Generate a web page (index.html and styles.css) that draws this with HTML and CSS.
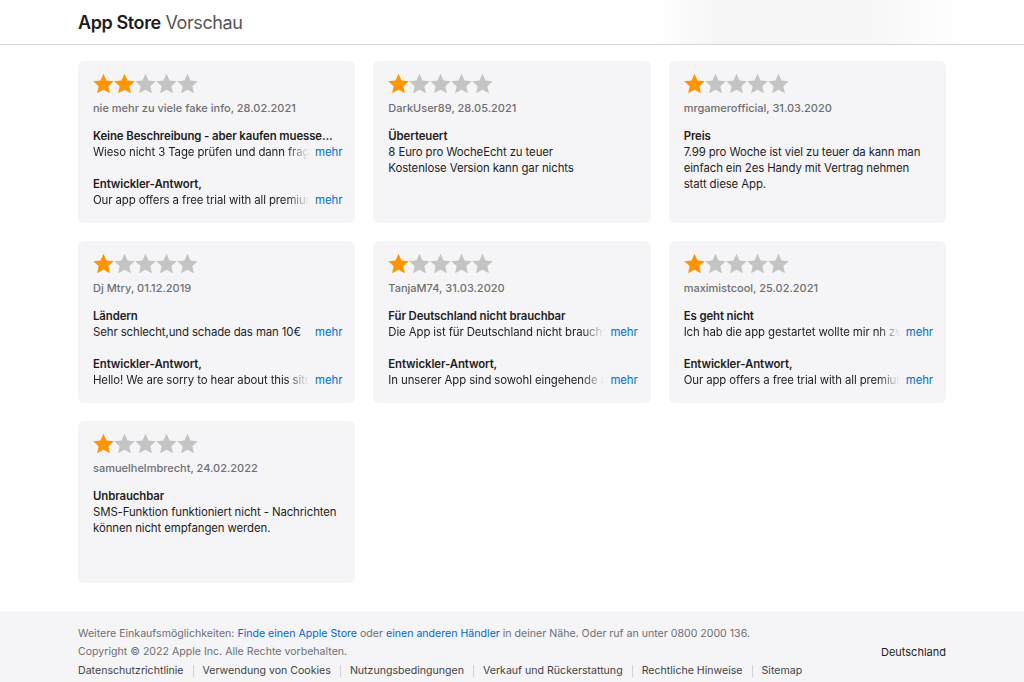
FILE: index.html
```html
<!DOCTYPE html>
<html lang="de">
<head>
<meta charset="utf-8">
<title>App Store Vorschau</title>
<link rel="stylesheet" href="styles.css">
</head>
<body>
<svg width="0" height="0" class="defs">
  <defs>
    <symbol id="star" viewBox="1.2 1.2 21.6 21">
      <path d="M12 1.6l3.1 6.9 7.5.8-5.6 5.1 1.6 7.4L12 18l-6.6 3.8L7 14.4 1.4 9.3l7.5-.8z"/>
    </symbol>
  </defs>
</svg>
<header class="topbar">
  <div class="wrap">
    <h1 class="title"><b>App Store</b> Vorschau</h1>
  </div>
</header>

<main class="wrap">
  <div class="grid">
    <article class="card">
      <div class="stars"><svg class="on"><use href="#star"/></svg><svg class="on"><use href="#star"/></svg><svg><use href="#star"/></svg><svg><use href="#star"/></svg><svg><use href="#star"/></svg></div>
      <div class="meta">nie mehr zu viele fake info, 28.02.2021</div>
      <div class="rtitle">Keine Beschreibung - aber kaufen muesse...</div>
      <div class="trunc"><span class="txt">Wieso nicht 3 Tage prüfen und dann fragen ob man das will</span><a class="more">mehr</a></div>
      <div class="rtitle gap">Entwickler-Antwort,</div>
      <div class="trunc"><span class="txt">Our app offers a free trial with all premium features</span><a class="more">mehr</a></div>
    </article>

    <article class="card">
      <div class="stars"><svg class="on"><use href="#star"/></svg><svg><use href="#star"/></svg><svg><use href="#star"/></svg><svg><use href="#star"/></svg><svg><use href="#star"/></svg></div>
      <div class="meta">DarkUser89, 28.05.2021</div>
      <div class="rtitle">Überteuert</div>
      <p class="body">8 Euro pro WocheEcht zu teuer<br>Kostenlose Version kann gar nichts</p>
    </article>

    <article class="card">
      <div class="stars"><svg class="on"><use href="#star"/></svg><svg><use href="#star"/></svg><svg><use href="#star"/></svg><svg><use href="#star"/></svg><svg><use href="#star"/></svg></div>
      <div class="meta">mrgamerofficial, 31.03.2020</div>
      <div class="rtitle">Preis</div>
      <p class="body">7.99 pro Woche ist viel zu teuer da kann man einfach ein 2es Handy mit Vertrag nehmen statt diese App.</p>
    </article>

    <article class="card">
      <div class="stars"><svg class="on"><use href="#star"/></svg><svg><use href="#star"/></svg><svg><use href="#star"/></svg><svg><use href="#star"/></svg><svg><use href="#star"/></svg></div>
      <div class="meta">Dj Mtry, 01.12.2019</div>
      <div class="rtitle">Ländern</div>
      <div class="trunc"><span class="txt short">Sehr schlecht,und schade das man 10€</span><a class="more">mehr</a></div>
      <div class="rtitle gap">Entwickler-Antwort,</div>
      <div class="trunc"><span class="txt">Hello! We are sorry to hear about this situation</span><a class="more">mehr</a></div>
    </article>

    <article class="card">
      <div class="stars"><svg class="on"><use href="#star"/></svg><svg><use href="#star"/></svg><svg><use href="#star"/></svg><svg><use href="#star"/></svg><svg><use href="#star"/></svg></div>
      <div class="meta">TanjaM74, 31.03.2020</div>
      <div class="rtitle">Für Deutschland nicht brauchbar</div>
      <div class="trunc"><span class="txt">Die App ist für Deutschland nicht brauchbar</span><a class="more">mehr</a></div>
      <div class="rtitle gap">Entwickler-Antwort,</div>
      <div class="trunc"><span class="txt">In unserer App sind sowohl eingehende als auch</span><a class="more">mehr</a></div>
    </article>

    <article class="card">
      <div class="stars"><svg class="on"><use href="#star"/></svg><svg><use href="#star"/></svg><svg><use href="#star"/></svg><svg><use href="#star"/></svg><svg><use href="#star"/></svg></div>
      <div class="meta">maximistcool, 25.02.2021</div>
      <div class="rtitle">Es geht nicht</div>
      <div class="trunc"><span class="txt">Ich hab die app gestartet wollte mir nh zweite</span><a class="more">mehr</a></div>
      <div class="rtitle gap">Entwickler-Antwort,</div>
      <div class="trunc"><span class="txt">Our app offers a free trial with all premium features</span><a class="more">mehr</a></div>
    </article>

    <article class="card">
      <div class="stars"><svg class="on"><use href="#star"/></svg><svg><use href="#star"/></svg><svg><use href="#star"/></svg><svg><use href="#star"/></svg><svg><use href="#star"/></svg></div>
      <div class="meta">samuelhelmbrecht, 24.02.2022</div>
      <div class="rtitle">Unbrauchbar</div>
      <p class="body">SMS-Funktion funktioniert nicht - Nachrichten können nicht empfangen werden.</p>
    </article>
  </div>
</main>

<footer class="footer">
  <div class="wrap">
    <p class="fline">Weitere Einkaufsmöglichkeiten: <a class="flink">Finde einen Apple Store</a> oder <a class="flink">einen anderen Händler</a> in deiner Nähe. Oder ruf an unter 0800 2000 136.</p>
    <div class="frow">
      <p class="fline">Copyright © 2022 Apple Inc. Alle Rechte vorbehalten.</p>
      <span class="country">Deutschland</span>
    </div>
    <nav class="legal">
      <a>Datenschutzrichtlinie</a>
      <a>Verwendung von Cookies</a>
      <a>Nutzungsbedingungen</a>
      <a>Verkauf und Rückerstattung</a>
      <a>Rechtliche Hinweise</a>
      <a>Sitemap</a>
    </nav>
  </div>
</footer>
</body>
</html>
```

FILE: styles.css
```css
* { box-sizing: border-box; }
html, body { margin: 0; padding: 0; }
body {
  font-family: Inter, "Open Sans", "Liberation Sans", sans-serif;
  color: #1d1d1f;
  background: #fff;
  -webkit-font-smoothing: antialiased;
}
.defs { position: absolute; width: 0; height: 0; }

.wrap { width: 868px; margin: 0 auto; }

.topbar {
  height: 45px;
  border-bottom: 1px solid #d6d6d6;
  background: linear-gradient(to right, #fff 0%, #fff 64%, #f6f6f6 70%, #f7f7f7 85%, #fff 94%);
}
.topbar .wrap { height: 44px; display: flex; align-items: center; }
.title {
  margin: 0;
  font-size: 18px;
  font-weight: 400;
  color: #555;
  letter-spacing: -0.4px;
}
.title b { color: #1d1d1f; font-weight: 600; }

main.wrap { padding-top: 16px; }
.grid {
  display: grid;
  grid-template-columns: repeat(3, 1fr);
  grid-auto-rows: 162px;
  gap: 18px;
}
.card {
  background: #f5f5f7;
  border-radius: 6px;
  padding: 12px 13px 12px 15px;
  font-size: 11.4px;
  letter-spacing: -0.1px;
  overflow: hidden;
}
.stars { display: flex; gap: 0; height: 21px; }
.stars svg { width: 21px; height: 21px; fill: #c4c4c4; }
.stars svg.on { fill: #ff9500; }
.meta {
  margin-top: 6px;
  line-height: 16px;
  font-size: 11px;
  letter-spacing: 0;
  font-weight: 500;
  color: #6e6e73;
}
.rtitle {
  margin-top: 12px;
  line-height: 16px;
  font-weight: 600;
  color: #1d1d1f;
}
.rtitle.gap { margin-top: 16px; }
.body { margin: 0; line-height: 16px; color: #1d1d1f; }
.trunc { display: flex; line-height: 16px; }
.txt {
  flex: 1;
  white-space: nowrap;
  overflow: hidden;
  -webkit-mask-image: linear-gradient(to right, #000 calc(100% - 26px), transparent calc(100% - 4px));
  mask-image: linear-gradient(to right, #000 calc(100% - 26px), transparent calc(100% - 4px));
}
.txt.short { -webkit-mask-image: none; mask-image: none; }
.more { color: #0070c9; margin-left: 2px; }

.footer {
  margin-top: 28px;
  background: #f5f5f7;
  padding: 14px 0 10px;
  font-size: 10.6px;
  color: #6e6e73;
}
.fline { margin: 0; line-height: 18px; }
.flink { color: #0066cc; }
.frow { display: flex; justify-content: space-between; align-items: center; }
.country { color: #1d1d1f; line-height: 18px; font-size: 11px; }
.legal { display: flex; margin-top: 1px; line-height: 18px; }
.legal a { color: #424245; padding: 0 9px; border-left: 1px solid #d2d2d7; line-height: 12px; margin: 3px 0; }
.legal a:first-child { padding-left: 0; border-left: none; }
```
